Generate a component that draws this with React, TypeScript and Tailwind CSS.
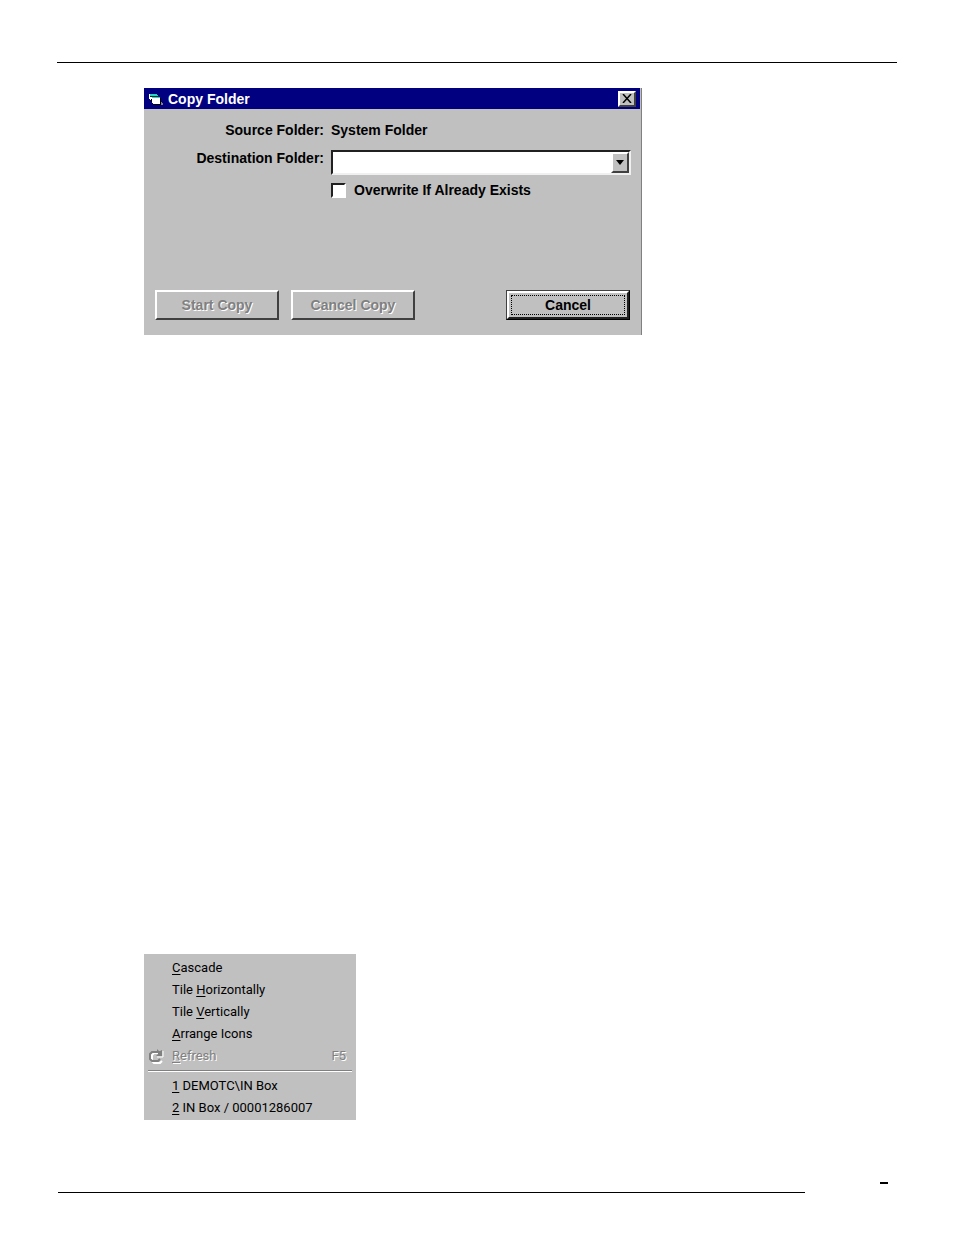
import { useState } from "react";
import type { ReactNode } from "react";
import clsx from "clsx";

const raised =
  "border-2 border-t-white border-l-white border-r-[#404040] border-b-[#404040]";

const FormIcon = () => (
  <svg width="16" height="14" viewBox="0 0 16 14" shapeRendering="crispEdges" aria-hidden="true">
    <path d="M1 2h8v1h1v1h1v1h1v7H5v-1H4V8H2V7H1z" fill="#fff" />
    <path d="M2 2h7v1h1v1H2zM4 5h8v1H4z" fill="#30d0c0" />
    <path d="M2 4h9v1H2z" fill="#003030" />
    <path d="M3 7h1v3H3zM5 12h8v1H5zM12 6h1v6h-1z" fill="#000" />
    <path d="M13 10h1v1h1v2h-2z" fill="#808080" />
  </svg>
);

const RefreshIcon = () => (
  <svg width="16" height="16" viewBox="0 0 16 16" fill="none" aria-hidden="true">
    <path d="M13 12l-2 2H5l-2-2V6l2-2h5" stroke="#fff" strokeWidth="2" transform="translate(1 1)" />
    <path d="M15 3v6H9" stroke="#fff" />
    <path d="M12 11l-2 2H4l-2-2V6l2-2h6" stroke="#808080" strokeWidth="2" />
    <path d="M9 1l2 2h1l2-1v6H8l2-2V5H9z" fill="#808080" />
  </svg>
);

type PushButtonProps = {
  children: ReactNode;
  disabled?: boolean;
  focused?: boolean;
};

const PushButton = ({ children, disabled, focused }: PushButtonProps) => {
  return (
    <button
      type="button"
      disabled={disabled}
      className={clsx(
        "h-[30px] w-[124px]",
        focused
          ? "border border-t-[#404040] border-l-[#404040] border-r-black border-b-black"
          : raised,
        disabled && "text-[#808080] [text-shadow:1px_1px_0_#fff]"
      )}
    >
      {focused ? (
        <span className="flex h-full border-2 border-t-white border-l-white border-r-[#202020] border-b-[#202020] p-[2px]">
          <span className="flex flex-1 items-center justify-center border border-dotted border-black">
            {children}
          </span>
        </span>
      ) : (
        children
      )}
    </button>
  );
};

const CopyFolderDialog = () => {
  const [overwrite, setOverwrite] = useState(false);

  return (
    <section
      aria-labelledby="copy-title"
      className="w-[498px] max-w-full border-r border-[#808080] bg-[#c0c0c0] font-['Liberation_Sans',sans-serif] text-sm leading-4 font-bold"
    >
      <header className="mr-px flex h-[21px] items-center gap-1 bg-[#000080] px-1 text-white">
        <FormIcon />
        <h1 id="copy-title" className="flex-1">Copy Folder</h1>
        <button
          type="button"
          aria-label="Close"
          className={clsx("flex h-4 w-[18px] items-center justify-center bg-[#c0c0c0]", raised)}
        >
          <svg width="10" height="9" viewBox="0 0 10 9" aria-hidden="true">
            <path d="M1 0l8 9M9 0L1 9" stroke="#000" strokeWidth="1.5" />
          </svg>
        </button>
      </header>

      <div className="grid grid-cols-[180px_1fr] gap-x-[7px] pt-[13px] pr-[10px]">
        <span className="text-right">Source Folder:</span>
        <span>System Folder</span>
        <label htmlFor="destination" className="mt-3 text-right">Destination Folder:</label>
        <div className="relative mt-3 h-[25px]">
          <select
            id="destination"
            className="h-full w-full appearance-none border-2 border-t-[#202020] border-l-[#202020] border-r-[#f0f0f0] border-b-[#f0f0f0] bg-white px-1"
          >
            <option value=""></option>
          </select>
          <span
            className={clsx(
              "pointer-events-none absolute top-[2px] right-[2px] bottom-[2px] flex w-[18px] items-center justify-center bg-[#c0c0c0]",
              raised
            )}
          >
            <svg width="8" height="5" viewBox="0 0 8 5" aria-hidden="true">
              <path d="M0 0h8L4 5z" fill="#000" />
            </svg>
          </span>
        </div>
        <label className="col-start-2 mt-[7px] flex items-center gap-2">
          <input
            type="checkbox"
            checked={overwrite}
            onChange={(e) => setOverwrite(e.target.checked)}
            className="size-[15px] appearance-none border-2 border-t-[#202020] border-l-[#202020] border-r-white border-b-white bg-white checked:bg-[#404040]"
          />
          Overwrite If Already Exists
        </label>
      </div>

      <div className="mt-[92px] flex gap-3 pr-[11px] pb-[15px] pl-[11px]">
        <PushButton disabled>Start Copy</PushButton>
        <PushButton disabled>Cancel Copy</PushButton>
        <div className="ml-auto">
          <PushButton focused>Cancel</PushButton>
        </div>
      </div>
    </section>
  );
};

type MenuItemProps = {
  before?: string;
  accessKey: string;
  after: string;
  icon?: ReactNode;
  shortcut?: string;
  disabled?: boolean;
};

const MenuItem = ({ before, accessKey, after, icon, shortcut, disabled }: MenuItemProps) => {
  return (
    <button
      type="button"
      role="menuitem"
      disabled={disabled}
      className={clsx(
        "flex h-[22px] w-full items-center pr-[10px] pl-1 text-left",
        disabled && "text-[#808080] [text-shadow:1px_1px_0_#fff]"
      )}
    >
      <span className="w-6 shrink-0">{icon}</span>
      <span className="flex-1 whitespace-pre">
        {before}
        <span className="underline underline-offset-2">{accessKey}</span>
        {after}
      </span>
      {shortcut && <span>{shortcut}</span>}
    </button>
  );
};

const WindowMenu = () => (
  <div
    role="menu"
    className="w-[212px] bg-[#c0c0c0] pt-[3px] pb-px font-['Roboto','Liberation_Sans',sans-serif] text-[13px] leading-4"
  >
    <MenuItem accessKey="C" after="ascade" />
    <MenuItem before="Tile " accessKey="H" after="orizontally" />
    <MenuItem before="Tile " accessKey="V" after="ertically" />
    <MenuItem accessKey="A" after="rrange Icons" />
    <MenuItem accessKey="R" after="efresh" icon={<RefreshIcon />} shortcut="F5" disabled />
    <hr className="mx-1 my-[3px] h-[2px] border-t border-b border-t-[#808080] border-b-white" />
    <MenuItem accessKey="1" after=" DEMOTC\IN Box" />
    <MenuItem accessKey="2" after=" IN Box / 00001286007" />
  </div>
);

const App = () => {
  return (
    <div className="flex min-h-screen flex-col bg-white px-[57px] pt-[62px] text-black">
      <hr className="border-black" />
      <main className="pt-[25px] pl-[87px]">
        <CopyFolderDialog />
        <div className="mt-[619px]">
          <WindowMenu />
        </div>
      </main>
      <footer className="mt-[62px] flex items-start pr-[9px]">
        <hr className="mt-[10px] ml-px flex-1 border-black" />
        <hr className="ml-[75px] w-2 border-t-2 border-black" />
      </footer>
    </div>
  );
};

export default App;
